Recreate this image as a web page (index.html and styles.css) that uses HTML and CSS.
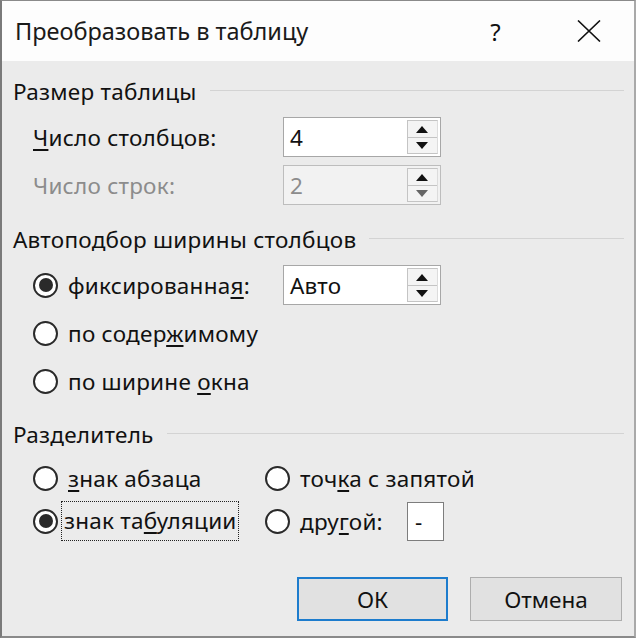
FILE: index.html
```html
<!DOCTYPE html>
<html lang="ru">
<head>
<meta charset="utf-8">
<title>Преобразовать в таблицу</title>
<link rel="stylesheet" href="styles.css">
</head>
<body>
<div class="window">
  <div class="titlebar">
    <span class="title">Преобразовать в таблицу</span>
    <span class="help">?</span>
    <svg class="close" width="24" height="22" viewBox="0 0 24 22"><path d="M1 0.5 L23 21.5 M23 0.5 L1 21.5" stroke="#111" stroke-width="1.6" fill="none"/></svg>
  </div>
  <div class="content">
    <div class="group h1"><span>Размер таблицы</span><i class="rule"></i></div>
    <div class="row r1">
      <span class="label"><span><u>Ч</u>исло столбцов:</span></span>
      <div class="spin"><span class="val">4</span><div class="btns"><b class="up"></b><b class="down"></b></div></div>
    </div>
    <div class="row r2">
      <span class="label disabled"><span>Число строк:</span></span>
      <div class="spin off"><span class="val">2</span><div class="btns"><b class="up"></b><b class="down"></b></div></div>
    </div>

    <div class="group h2"><span>Автоподбор ширины столбцов</span><i class="rule"></i></div>
    <div class="row r3">
      <span class="label opt"><i class="radio on"></i><span>фиксированна<u>я</u>:</span></span>
      <div class="spin"><span class="val">Авто</span><div class="btns"><b class="up"></b><b class="down"></b></div></div>
    </div>
    <div class="row r4"><span class="label opt"><i class="radio"></i><span>по содер<u>ж</u>имому</span></span></div>
    <div class="row r5"><span class="label opt"><i class="radio"></i><span>по ширине <u>о</u>кна</span></span></div>

    <div class="group h3"><span>Разделитель</span><i class="rule"></i></div>
    <div class="sep r6">
      <span class="opt c1"><i class="radio"></i><span><u>з</u>нак абзаца</span></span>
      <span class="opt c2"><i class="radio"></i><span>точ<u>к</u>а с запятой</span></span>
    </div>
    <div class="sep r7">
      <span class="opt c1"><i class="radio on"></i><span class="focus">знак та<u>б</u>уляции</span></span>
      <span class="opt c2"><i class="radio"></i><span>дру<u>г</u>ой:</span><span class="other">-</span></span>
    </div>

    <div class="buttons">
      <button class="btn ok">ОК</button>
      <button class="btn">Отмена</button>
    </div>
  </div>
</div>
</body>
</html>
```
FILE: styles.css
```css
html, body {
  margin: 0;
  padding: 0;
  background: #ebebeb;
}
body {
  font-family: "Noto Sans", "Open Sans", sans-serif;
  font-size: 22.5px;
  letter-spacing: 0.25px;
  color: #111;
}
.window {
  width: 636px;
  height: 638px;
  box-sizing: border-box;
  border-left: 2px solid #7a7a7a;
  border-top: 1px solid #8a8a8a;
  border-right: 2px solid #a9a9a9;
  border-bottom: 2px solid #8a8a8a;
  background: #ebebeb;
  display: flex;
  flex-direction: column;
}
.titlebar {
  height: 60px;
  background: #fdfdfd;
  display: flex;
  align-items: center;
  padding-left: 13px;
}
.title {
  font-size: 23.5px;
  letter-spacing: 0;
  color: #1a1a1a;
  flex: 1;
}
.help {
  font-size: 24px;
  margin-right: 76px;
}
.close {
  margin-right: 33px;
}
.content {
  padding: 0 10px 0 11px;
  display: flex;
  flex-direction: column;
}
.group {
  height: 40px;
  display: flex;
  align-items: center;
}
.group span { white-space: nowrap; }
.rule {
  flex: 1;
  height: 1px;
  background: #d3d3d3;
  margin-left: 13px;
  margin-top: -2px;
}
.h1 { margin-top: 10px; }
.h2 { margin-top: 10px; }
.h3 { margin-top: 9px; }
.row {
  height: 48px;
  display: flex;
  align-items: center;
  padding-left: 20px;
}
.r1, .r3 { margin-top: 2px; }
.label {
  width: 250px;
  display: flex;
  align-items: center;
  white-space: nowrap;
}
.disabled { color: #8c8c8c; }
u { text-decoration-thickness: 2px; text-underline-offset: 3px; }
.spin {
  width: 158px;
  height: 40px;
  box-sizing: border-box;
  border: 1px solid #a7a7a7;
  background: #fff;
  display: flex;
  align-items: center;
}
.spin.off { background: #f2f2f2; border-color: #bdbdbd; color: #8c8c8c; }
.val { flex: 1; padding-left: 6px; }
.btns {
  width: 31px;
  height: 34px;
  margin-right: 2px;
  display: flex;
  flex-direction: column;
  border: 1px solid #c4c4c4;
  border-right-color: #dcdcdc;
  box-sizing: border-box;
}
.btns b {
  flex: 1;
  position: relative;
  background: #f4f4f4;
}
.btns b.up { border-bottom: 1px solid #c4c4c4; }
.btns b::after {
  content: "";
  position: absolute;
  left: 8px;
  top: 5px;
  border-left: 6px solid transparent;
  border-right: 6px solid transparent;
}
.btns b.up::after { border-bottom: 7px solid #111; }
.btns b.down::after { border-top: 7px solid #111; top: 4px; }
.spin.off .btns b.down::after { border-top-color: #666; }
.opt {
  display: flex;
  align-items: center;
  white-space: nowrap;
}
.radio {
  width: 25px;
  height: 25px;
  box-sizing: border-box;
  border: 2px solid #2a2a2a;
  border-radius: 50%;
  background: #fff;
  margin-right: 10px;
  position: relative;
  flex: none;
}
.radio.on::after {
  content: "";
  position: absolute;
  left: 3.5px;
  top: 3.5px;
  width: 14px;
  height: 14px;
  border-radius: 50%;
  background: #2a2a2a;
}
.sep {
  display: flex;
  align-items: center;
  padding-left: 20px;
}
.r6 { height: 44px; margin-top: 2px; }
.r7 { height: 42px; }
.c1 { width: 232px; }
.r7 .c1 .radio { margin-right: 4px; }
.focus {
  outline: 1px dotted #222;
  padding: 3px 1px 4px 2px;
}
.other {
  display: inline-flex;
  width: 37px;
  height: 39px;
  box-sizing: border-box;
  border: 1px solid #7d7d7d;
  background: #fff;
  margin-left: 24px;
  align-items: center;
  padding-left: 7px;
}
.buttons {
  margin-top: 35px;
  height: 44px;
  display: flex;
  justify-content: flex-end;
  gap: 22px;
  padding-right: 2px;
}
.btn {
  width: 152px;
  height: 44px;
  box-sizing: border-box;
  border: 1px solid #adadad;
  background: #e1e1e1;
  font-family: inherit;
  font-size: 22.5px;
  color: #111;
  padding: 0;
}
.btn.ok {
  border: 2px solid #1d7ccd;
  width: 151px;
}
```
